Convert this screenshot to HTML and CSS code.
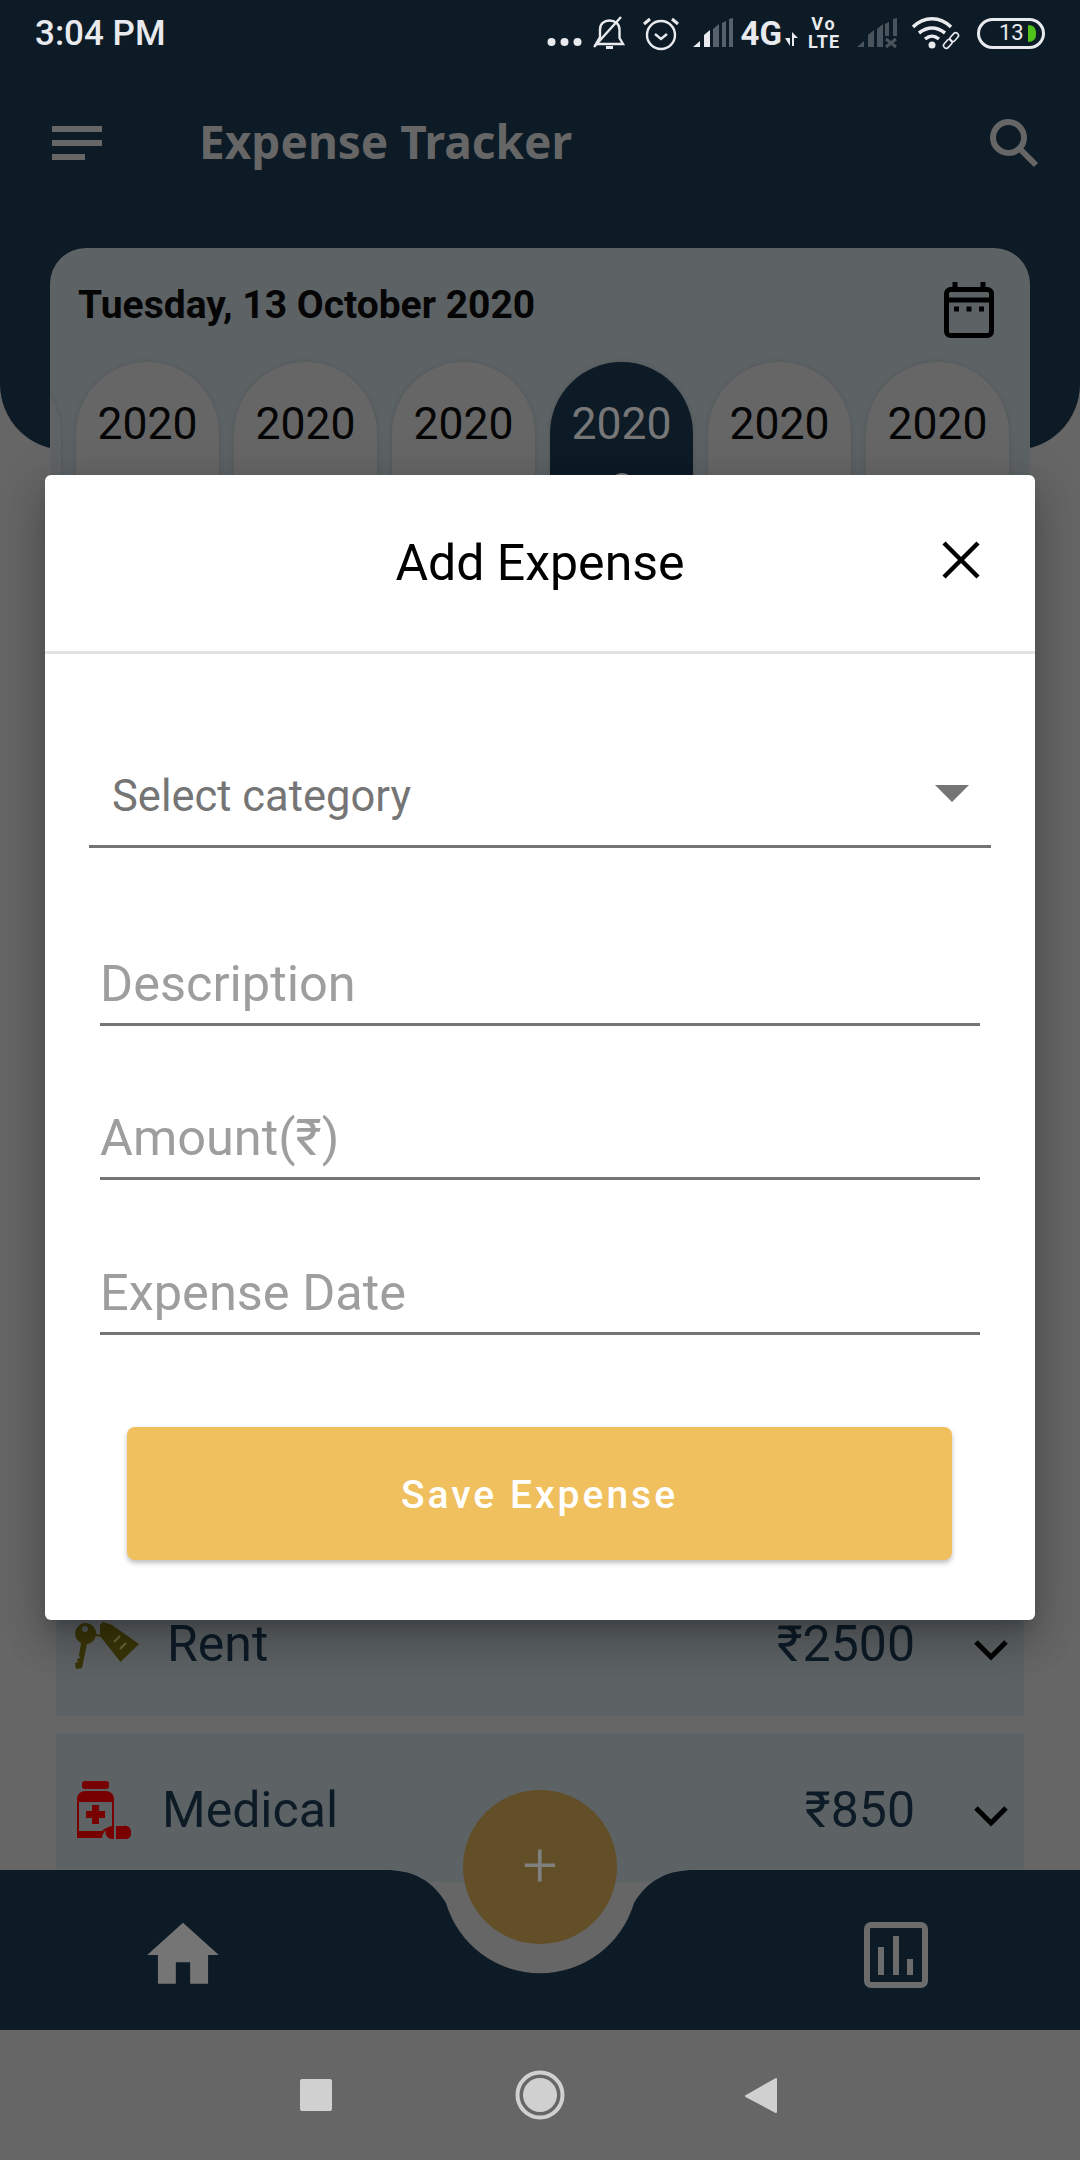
FILE: index.html
```html
<!DOCTYPE html>
<html lang="en">
<head>
    <meta charset="UTF-8">
    <meta name="viewport" content="width=device-width, initial-scale=1.0">
    <title>Expense Tracker</title>
    <link rel="stylesheet" href="styles.css">
</head>
<body>
<div class="app">
    <header class="header">
        <div class="status-bar">
            <span class="clock">3:04 PM</span>
            <div class="status-icons">
                <svg class="st-dots" viewBox="0 0 35 12"><circle cx="4.5" cy="6" r="4" /><circle cx="17.500" cy="6" r="4" /><circle cx="30.500" cy="6" r="4" /></svg>
                <svg class="st-bell" viewBox="0 0 33 34" fill="none" stroke="#e8eaed" stroke-width="2.4"><path d="M3 28h27l-3.500-6V13.500C26.500 8 22 4.500 16.500 4.500S7 8 7 13.500V21z" /><path d="M1 31 L28 1" /><path d="M13 31.500h7" stroke-width="3" /></svg>
                <svg class="st-alarm" viewBox="0 0 36 36" fill="none" stroke="#e8eaed" stroke-width="2.400"><circle cx="18" cy="20" r="14" /><path d="M12 19l6 5 6-5" /><path d="M1 9l6-5M35 9l-6-5" stroke-width="3" /></svg>
                <svg class="st-signal" viewBox="0 0 40 30"><path d="M0 29l7-6v6zM11 29V17l6-5v17z" fill="#e8eaed" /><path d="M20 29V11l6-5v23zM29 29V5l4-2v26zM36 29V1l4-1v29z" fill="#56616b" /></svg>
                <span class="st-4g">4G</span>
                <svg class="st-arrows" viewBox="0 0 14 14"><path d="M0 6h5v8zM7 0l6 6H9v8H7z" fill="#e8eaed" /></svg>
                <div class="st-volte"><span class="st-vo">Vo</span><span class="st-lte">LTE</span></div>
                <svg class="st-signal" viewBox="0 0 40 30"><path d="M0 29l7-6v6zM11 29V17l6-5v17zM20 29V11l6-5v23z" fill="#4a545d" /><path d="M28 18V6l4-2v14zM36 18V1l4-1v18z" fill="#4a545d" /><path d="M29 21l10 8M39 21l-10 8" stroke="#4a545d" stroke-width="3" /></svg>
                <svg class="st-wifi" viewBox="0 0 50 34" fill="none" stroke="#e8eaed"><path d="M2 11C13 0 29 0 40 11" stroke-width="3.500" /><path d="M8 17c9-7 17-7 26 0" stroke-width="3.500" /><path d="M14 23c5-4 9-4 14 0" stroke-width="3.500" /><circle cx="21" cy="29" r="3.500" fill="#e8eaed" stroke="none" /><rect x="32" y="25" width="10" height="5.500" rx="2.700" transform="rotate(-48 37 28)" stroke-width="1.600" /><rect x="38" y="18.500" width="10" height="5.500" rx="2.700" transform="rotate(-48 43 21)" stroke-width="1.600" /></svg>
                <div class="battery"><span>13</span><i class="battery-level"></i></div>
            </div>
        </div>
        <div class="toolbar">
            <div class="menu-icon"><i></i><i></i><i></i></div>
            <h1 class="title">Expense Tracker</h1>
            <svg class="search-icon" viewBox="0 0 50 50" fill="none" stroke="#666" stroke-width="6"><circle cx="19.500" cy="19.500" r="15.500" /><path d="M30 30l17 17" /></svg>
        </div>
    </header>

    <section class="date-card">
        <div class="date-row">
            <span class="date-text">Tuesday, 13 October 2020</span>
            <svg class="calendar-icon" viewBox="0 0 50 56" fill="none" stroke="#000" stroke-width="5"><rect x="2.500" y="7.500" width="45" height="46" rx="4" /><path d="M2 18h46" /><path d="M11 0v8M39 0v8" /><path d="M10 27h5M22.500 27h5M35 27h5" stroke-width="5" /></svg>
        </div>
        <div class="year-row">
            <div class="year-pill off-screen"></div>
            <div class="year-pill">2020</div>
            <div class="year-pill">2020</div>
            <div class="year-pill">2020</div>
            <div class="year-pill selected">2020<i class="pill-dot"></i></div>
            <div class="year-pill">2020</div>
            <div class="year-pill">2020</div>
        </div>
    </section>

    <section class="expense-list">
        <div class="expense-row">
            <svg class="rent-icon" viewBox="0 0 66 50"><path d="M3 50l-1-6 3-1-1-3 3-1-1-3 2-12a10.500 10.500 0 1 1 6 1l-5 24z" fill="#3a3608" /><circle cx="12" cy="10" r="3" fill="#55585a" /><path d="M15 13l12 4" stroke="#3a3608" stroke-width="2" /><path d="M27 17V6l3-3 9 3 27 19-18.500 18z" fill="#3a3608" /><path d="M41 23l6-6M47 30l6-6" stroke="#6b6a3c" stroke-width="2" /></svg>
            <span class="expense-name">Rent</span>
            <span class="expense-amount">₹2500</span>
            <svg class="chevron" viewBox="0 0 34 22" fill="none" stroke="#000" stroke-width="5"><path d="M2 3l15 15L32 3" /></svg>
        </div>
        <div class="expense-row">
            <svg class="medical-icon" viewBox="0 0 54 58"><rect x="5" y="0" width="27" height="8" rx="3" fill="#780000" /><path d="M0 57V18c0-5 4-8 8-8h21c4 0 8 3 8 8v28a12 12 0 0 0-12 11z" fill="#780000" /><path d="M2 21h33v25a13 13 0 0 0-10 4H2z" fill="#5d6265" /><path d="M0 50h22v7H0z" fill="#780000" /><path d="M15 24h7v6h6v7h-6v6h-7v-6H9v-7h6z" fill="#780000" /><path d="M35 45h11a6 6 0 0 1 8 6 6 6 0 0 1-8 7H35a6.500 6.500 0 0 1 0-13z" fill="#780000" /><path d="M38 45v13" stroke="#5d6265" stroke-width="2" /></svg>
            <span class="expense-name medical">Medical</span>
            <span class="expense-amount">₹850</span>
            <svg class="chevron" viewBox="0 0 34 22" fill="none" stroke="#000" stroke-width="5"><path d="M2 3l15 15L32 3" /></svg>
        </div>
    </section>

    <nav class="bottom-bar">
        <svg class="bar-shape" viewBox="0 0 1080 160"><path d="M0 0H385C410 0 431 8 446 33A98 98 0 0 0 634 33C649 8 670 0 695 0H1080V160H0Z" fill="#0d1b27" /></svg>
        <svg class="home-icon" viewBox="0 0 24 24"><path d="M10 20v-6h4v6h5v-8h3L12 3 2 12h3v8z" fill="#757575" /></svg>
        <svg class="stats-icon" viewBox="0 0 64 66" fill="none" stroke="#6c6c6c"><rect x="3" y="3" width="58" height="60" rx="4" stroke-width="6" /><path d="M17 53V25M32 53V14M46 53V37" stroke-width="6" /></svg>
    </nav>
    <button class="fab">+</button>

    <div class="system-nav">
        <i class="nav-square"></i>
        <svg class="nav-circle" viewBox="0 0 50 50"><circle cx="25" cy="25" r="22.500" fill="none" stroke="#d0d0d0" stroke-width="4" /><circle cx="25" cy="25" r="17" fill="#d0d0d0" /></svg>
        <svg class="nav-back" viewBox="0 0 32 37"><path d="M31 2v33L1 19z" fill="#d0d0d0" stroke="#d0d0d0" stroke-width="2" stroke-linejoin="round" /></svg>
    </div>

    <div class="modal">
        <div class="modal-header">
            <h2 class="modal-title">Add Expense</h2>
            <svg class="close-icon" viewBox="0 0 38 38" fill="none" stroke="#000" stroke-width="4.500"><path d="M2 2l34 34M36 2L2 36" /></svg>
        </div>
        <form class="modal-body" onsubmit="return false;">
            <div class="select-field">
                <span>Select category</span>
                <i class="select-arrow"></i>
            </div>
            <div class="text-field">Description</div>
            <div class="text-field">Amount(₹)</div>
            <div class="text-field">Expense Date</div>
            <button class="save-button" type="submit">Save Expense</button>
        </form>
    </div>
</div>
</body>
</html>
```

FILE: styles.css
```css
/* Page is drawn with the dimmed colours behind the dialog */
* {
    box-sizing: border-box;
}
html, body {
    margin: 0;
    padding: 0;
}
body {
    font-family: Roboto, Arial, sans-serif;
    background-color: #666;
}
i {
    display: block;
}
svg {
    display: block;
    flex: none;
}
.app {
    position: relative;
    width: 1080px;
    height: 2160px;
    overflow: hidden;
    display: flex;
    flex-direction: column;
    background-color: #666;
}

/* Header */
.header {
    height: 450px;
    flex: none;
    background-color: #0d1b27;
    border-radius: 0 0 66px 66px;
}
.status-bar {
    height: 66px;
    padding: 0 35px;
    display: flex;
    align-items: center;
    justify-content: space-between;
}
.clock {
    font-size: 35px;
    font-weight: 500;
    color: #e8eaed;
}
.status-icons {
    display: flex;
    align-items: center;
    gap: 16px;
    color: #e8eaed;
}
.st-dots {
    width: 35px;
    height: 12px;
    margin-top: 18px;
    fill: #e8eaed;
}
.st-bell {
    width: 33px;
    height: 34px;
    margin-left: -5px;
}
.st-alarm {
    width: 36px;
    height: 36px;
    margin: 0 -2px 0 1px;
}
.st-signal {
    width: 40px;
    height: 30px;
}
.st-4g {
    font-size: 33px;
    font-weight: 700;
    margin-left: -8px;
}
.st-arrows {
    width: 14px;
    height: 14px;
    margin: 12px 0 0 -13px;
}
.st-volte {
    width: 34px;
    display: flex;
    flex-direction: column;
    align-items: center;
    font-size: 18px;
    font-weight: 700;
    line-height: 18px;
    margin-left: -8px;
}
.st-vo {
    letter-spacing: 2px;
}
.st-lte {
    letter-spacing: 1px;
}
.st-wifi {
    width: 50px;
    height: 34px;
    margin-left: -2px;
}
.battery {
    width: 68px;
    height: 31px;
    border: 3px solid #e8eaed;
    border-radius: 16px;
    padding: 0 6px 0 19px;
    display: flex;
    align-items: center;
    gap: 4px;
    font-size: 22px;
    line-height: 1;
}
.battery-level {
    width: 8px;
    height: 17px;
    background-color: #4fc31a;
    border-radius: 1px 8px 8px 1px;
}
.toolbar {
    height: 154px;
    padding: 0 41px 0 52px;
    display: flex;
    align-items: center;
}
.menu-icon {
    width: 50px;
    display: flex;
    flex-direction: column;
    gap: 8px;
}
.menu-icon i {
    height: 6px;
    background-color: #666;
}
.menu-icon i:last-child {
    width: 33px;
}
.title {
    margin: -5px 0 0 97px;
    flex: 1;
    font-family: "Noto Sans", sans-serif;
    font-size: 46px;
    font-weight: 700;
    color: #666;
}
.search-icon {
    width: 50px;
    height: 50px;
}

/* Date card */
.date-card {
    flex: none;
    height: 600px;
    margin: -202px 50px 0;
    background-color: #5d6265;
    border-radius: 36px 36px 0 0;
    overflow: hidden;
    position: relative;
}
.date-row {
    height: 114px;
    padding: 34px 36px 0 28px;
    display: flex;
    justify-content: space-between;
}
.date-text {
    font-size: 39px;
    font-weight: 700;
    color: #050505;
}
.calendar-icon {
    width: 50px;
    height: 56px;
}
.year-row {
    display: flex;
    gap: 15px;
    margin-left: -132px;
}
.year-pill {
    position: relative;
    flex: none;
    width: 143px;
    height: 300px;
    padding-top: 36px;
    text-align: center;
    font-size: 44.500px;
    color: #050505;
    background-color: #666;
    border-radius: 72px 72px 0 0;
    box-shadow: 0 0 5px rgba(0, 0, 0, 0.12);
}
.year-pill.off-screen {
    background-color: #606366;
}
.year-pill.selected {
    background-color: #0d1b27;
    color: #777;
}
.pill-dot {
    position: absolute;
    top: 111px;
    left: 61px;
    width: 22px;
    height: 22px;
    border-radius: 50%;
    background-color: #777;
}

/* Expense rows */
.expense-list {
    margin-top: auto;
    padding: 0 56px 278px;
    display: flex;
    flex-direction: column;
    gap: 17px;
}
.expense-row {
    height: 149px;
    padding: 5px 16px 0 17px;
    display: flex;
    align-items: center;
    background-color: #5d6265;
    color: #0d1b27;
    font-size: 50px;
}
.rent-icon {
    width: 66px;
    height: 50px;
    margin-top: -1px;
}
.medical-icon {
    width: 54px;
    height: 58px;
    margin: -1px 0 0 4px;
}
.expense-name {
    flex: 1;
    margin-left: 28px;
}
.expense-name.medical {
    margin-left: 31px;
}
.expense-amount {
    font-size: 50px;
}
.chevron {
    width: 34px;
    height: 22px;
    margin: 11px 0 0 59px;
}

/* Bottom bar */
.bottom-bar {
    position: absolute;
    left: 0;
    top: 1870px;
    width: 1080px;
    height: 160px;
}
.bar-shape {
    position: absolute;
    left: 0;
    top: 0;
    width: 1080px;
    height: 160px;
}
.home-icon {
    position: absolute;
    left: 140px;
    top: 42px;
    width: 86px;
    height: 86px;
}
.stats-icon {
    position: absolute;
    left: 864px;
    top: 52px;
    width: 64px;
    height: 66px;
}
.fab {
    position: absolute;
    left: 463px;
    top: 1790px;
    width: 154px;
    height: 154px;
    padding: 0 0 6px;
    border: none;
    border-radius: 50%;
    background-color: #624f28;
    color: #808080;
    font-family: Roboto, sans-serif;
    font-size: 62px;
    font-weight: 300;
}
.system-nav {
    position: absolute;
    left: 0;
    top: 2030px;
    width: 1080px;
    height: 130px;
    display: flex;
    align-items: center;
}
.nav-square {
    width: 32px;
    height: 32px;
    margin: 0 0 0 300px;
    background-color: #d0d0d0;
    border-radius: 2px;
}
.nav-circle {
    width: 50px;
    height: 50px;
    margin-left: 183px;
}
.nav-back {
    width: 32px;
    height: 37px;
    margin-left: 180px;
}

/* Dialog */
.modal {
    position: absolute;
    left: 45px;
    top: 475px;
    width: 990px;
    height: 1145px;
    background-color: #fff;
    border-radius: 6px;
    box-shadow: 0 11px 15px -7px rgba(0, 0, 0, 0.2), 0 24px 38px 3px rgba(0, 0, 0, 0.14), 0 9px 46px 8px rgba(0, 0, 0, 0.12);
}
.modal-header {
    position: relative;
    height: 179px;
    border-bottom: 3px solid #e2e2e2;
    display: flex;
    align-items: center;
    justify-content: center;
}
.modal-title {
    margin: 0;
    font-size: 50px;
    font-weight: 400;
    color: #000;
}
.close-icon {
    position: absolute;
    left: 897px;
    top: 66px;
    width: 38px;
    height: 38px;
}
.modal-body {
    display: flex;
    flex-direction: column;
    padding-top: 104px;
}
.select-field {
    height: 90px;
    margin: 0 44px;
    padding: 0 22px 10px 23px;
    border-bottom: 3px solid #757575;
    display: flex;
    align-items: center;
    justify-content: space-between;
    font-size: 43.500px;
    color: #757575;
}
.select-arrow {
    width: 0;
    height: 0;
    margin-top: -6px;
    border-left: 17px solid transparent;
    border-right: 17px solid transparent;
    border-top: 17px solid #757575;
}
.text-field {
    height: 80px;
    margin: 0 55px;
    border-bottom: 3px solid #757575;
    font-size: 50.500px;
    line-height: 76px;
    color: #9e9e9e;
}
.select-field + .text-field {
    margin-top: 98px;
}
.text-field + .text-field {
    margin-top: 75px;
}
.text-field:nth-child(3) {
    margin-top: 74px;
}
.save-button {
    height: 133px;
    margin: 92px 83px 0 82px;
    padding-top: 4px;
    border: none;
    border-radius: 8px;
    background-color: #f0bf5e;
    color: #fff;
    font-family: Roboto, sans-serif;
    font-size: 39px;
    font-weight: 500;
    letter-spacing: 3px;
    box-shadow: 0 3px 5px rgba(0, 0, 0, 0.25);
}
```
